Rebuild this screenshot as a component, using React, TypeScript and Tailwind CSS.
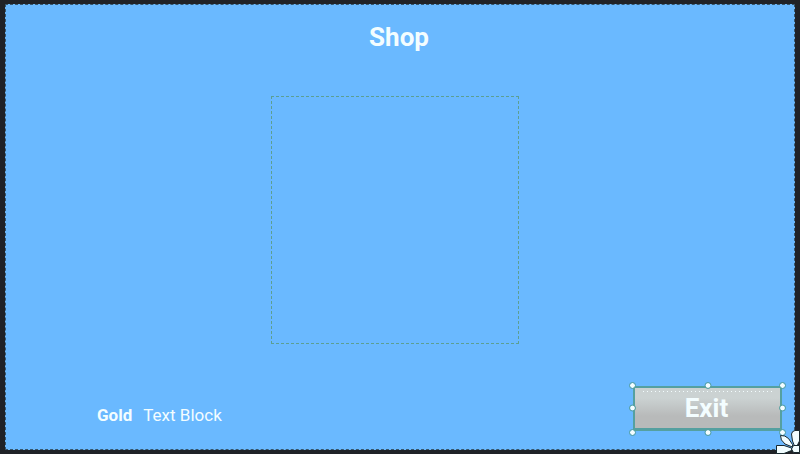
const handles = [
  'left-[-5px] top-[-5px]',
  'left-1/2 top-[-5px] -translate-x-1/2',
  'right-[-5px] top-[-5px]',
  'left-[-5px] top-1/2 -translate-y-1/2',
  'right-[-5px] top-1/2 -translate-y-1/2',
  'left-[-5px] bottom-[-7px]',
  'left-1/2 bottom-[-7px] -translate-x-1/2',
  'right-[-5px] bottom-[-7px]',
];

function ResizeFlower() {
  return (
    <svg
      className="absolute right-0 bottom-0 h-6 w-6"
      viewBox="0 0 24 24"
      fill="#f1fdff"
      stroke="#17282e"
      strokeWidth="1"
      strokeLinejoin="round"
      aria-hidden="true"
    >
      <path d="M18.5 16 16.5 11 L15.5 4 Q16 1 19 0.5 H23.5 V11 L21 16Z" />
      <path d="M16.5 17 9 14 Q4 10 4.5 5.5 Q9 5 12.5 8.5 L16.5 14.5Z" />
      <path d="M15.5 18 8 15.5 H0.5 V23.5 H8 L15.5 20.5Z" />
      <path d="M17.5 15.5 H23.5 V22.5 H17.5 L15.5 19Z" />
    </svg>
  );
}

export default function App() {
  return (
    <div className="relative flex h-screen flex-col bg-[#202227] px-[5px] py-1 font-['Roboto','Liberation_Sans',sans-serif] text-[#f3fdff]">
      <main className="flex flex-1 flex-col border border-dashed border-[#36556b] bg-[#6ab9ff]">
        <div className="pr-[10px]">
          <h1 className="pt-4 pl-2 text-center text-[26px] leading-8 font-bold">Shop</h1>
          <section
            aria-label="Shop items"
            className="mx-auto mt-[43px] h-[248px] w-[248px] border border-dashed border-[#5c9f91]"
          />
        </div>
        <footer className="mt-auto flex items-end justify-between pr-3 pb-[18px] pl-[91px]">
          <p className="flex gap-[11px] pb-1 text-[17px] leading-6">
            <span className="font-bold">Gold</span>
            <span>Text Block</span>
          </p>
          <button
            type="button"
            className="relative h-[45px] w-[149px] border-2 border-b-[3px] border-[#55a0a0] bg-linear-to-b from-[#cbd2d2] from-25% to-[#b8baba] to-70% pr-0.5 text-[26px] leading-8 font-bold"
          >
            <span className="absolute inset-x-2 top-[3px] h-px bg-[repeating-linear-gradient(to_right,#f3fdff_0_1px,transparent_1px_4px)]" />
            Exit
            {handles.map((place) => (
              <span
                key={place}
                className={`absolute h-[5px] w-[5px] rounded-full bg-[#f3fdff] outline outline-[#55a0a0] ${place}`}
              />
            ))}
          </button>
        </footer>
      </main>
      <ResizeFlower />
    </div>
  );
}
